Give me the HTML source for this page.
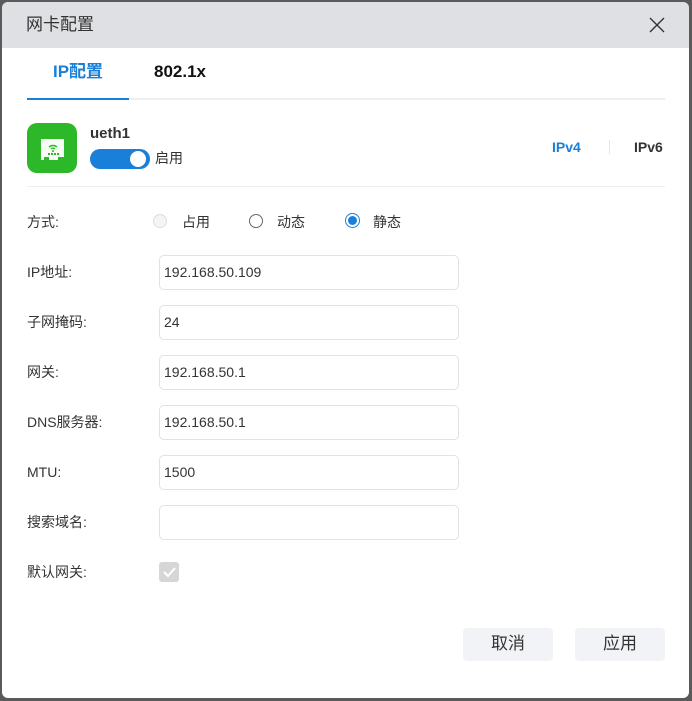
<!DOCTYPE html>
<html><head><meta charset="utf-8"><style>
*{margin:0;padding:0;box-sizing:border-box}
body{width:692px;height:701px;background:#5a5a5a;position:relative;overflow:hidden;font-family:"Liberation Sans","Noto Sans CJK SC",sans-serif;color:#333;font-size:14px;line-height:20px}
.dlg{position:absolute;left:2px;top:2px;width:687px;height:696px;background:#fff;border-radius:6px;overflow:hidden}
.hd{height:46px;background:#dfe0e3;position:relative}
.hd .t{position:absolute;left:24px;top:13px;font-size:17px;color:#333;line-height:20px}
.a{position:absolute}
.lbl{position:absolute;left:25px;font-size:14px;color:#333}
.inp{position:absolute;left:157px;width:300px;height:35px;border:1px solid #e0e2e8;border-radius:5px;padding-left:4px;line-height:33px;font-size:14px;color:#333}
.btn{position:absolute;top:626px;width:90px;height:33px;background:#f2f3f6;border-radius:4px;text-align:center;line-height:31px;font-size:17px;color:#333}
</style></head><body>
<div class="dlg">
<div class="hd"><div class="t">网卡配置</div>
<svg class="a" style="left:646px;top:14px" width="18" height="18" viewBox="0 0 18 18"><path d="M2 2L16 16M16 2L2 16" stroke="#333" stroke-width="1.4"/></svg></div>
<div class="a" style="left:51px;top:60px;font-size:17px;font-weight:bold;color:#1a7fd8">IP配置</div>
<div class="a" style="left:152px;top:60px;font-size:17px;font-weight:bold;color:#111">802.1x</div>
<div class="a" style="left:25px;top:96px;width:638px;height:2px;background:#eee"></div>
<div class="a" style="left:25px;top:96px;width:102px;height:2px;background:#1a7fd8"></div>
<div class="a" style="left:25px;top:121px;width:50px;height:50px;background:#2db82a;border-radius:10px"></div>
<svg class="a" style="left:25px;top:121px" width="50" height="50" viewBox="0 0 50 50"><path d="M14 16H37V34H31V37H22V34H17V37H14Z" fill="#fff" opacity=".95"/><path d="M22 24a6 6 0 0 1 8 0M24 26a3 3 0 0 1 4 0" stroke="#2db82a" stroke-width="1.5" fill="none"/><circle cx="26" cy="28" r="1" fill="#2db82a"/><path d="M21 31h11" stroke="#2db82a" stroke-width="2" stroke-dasharray="2 1"/></svg>
<div class="a" style="left:88px;top:122px;font-size:15px;font-weight:bold;color:#333">ueth1</div>
<div class="a" style="left:88px;top:147px;width:60px;height:20px;background:#1a7fd8;border-radius:10px"></div>
<div class="a" style="left:128px;top:149px;width:16px;height:16px;background:#fff;border-radius:50%"></div>
<div class="a" style="left:153px;top:146px;font-size:14px">启用</div>
<div class="a" style="left:550px;top:135px;font-size:14px;font-weight:bold;color:#1a7fd8">IPv4</div>
<div class="a" style="left:607px;top:138px;width:1px;height:14px;background:#e5e5e5"></div>
<div class="a" style="left:632px;top:135px;font-size:14px;font-weight:bold;color:#333">IPv6</div>
<div class="a" style="left:25px;top:184px;width:638px;height:1px;background:#eee"></div>
<div class="lbl" style="top:210px">方式:</div>
<div class="a" style="left:151px;top:212px;width:14px;height:14px;border:1px solid #ddd;border-radius:50%;background:#f5f5f5"></div>
<div class="a" style="left:180px;top:210px">占用</div>
<div class="a" style="left:247px;top:212px;width:14px;height:14px;border:1px solid #666;border-radius:50%"></div>
<div class="a" style="left:275px;top:210px">动态</div>
<div class="a" style="left:343px;top:211px;width:15px;height:15px;border:1px solid #1a7fd8;border-radius:50%;background:#fff"></div>
<div class="a" style="left:346px;top:214px;width:9px;height:9px;border-radius:50%;background:#1a7fd8"></div>
<div class="a" style="left:371px;top:210px">静态</div>
<div class="lbl" style="top:260px">IP地址:</div><div class="inp" style="top:253px">192.168.50.109</div>
<div class="lbl" style="top:310px">子网掩码:</div><div class="inp" style="top:303px">24</div>
<div class="lbl" style="top:360px">网关:</div><div class="inp" style="top:353px">192.168.50.1</div>
<div class="lbl" style="top:410px">DNS服务器:</div><div class="inp" style="top:403px">192.168.50.1</div>
<div class="lbl" style="top:460px">MTU:</div><div class="inp" style="top:453px">1500</div>
<div class="lbl" style="top:510px">搜索域名:</div><div class="inp" style="top:503px"></div>
<div class="lbl" style="top:560px">默认网关:</div>
<div class="a" style="left:157px;top:560px;width:20px;height:20px;background:#d6d6d6;border-radius:3px"></div>
<svg class="a" style="left:157px;top:560px" width="20" height="20"><path d="M5 10l4 4 7-8" stroke="#fff" stroke-width="2" fill="none"/></svg>
<div class="btn" style="left:461px">取消</div>
<div class="btn" style="left:573px">应用</div>
</div>
</body></html>
